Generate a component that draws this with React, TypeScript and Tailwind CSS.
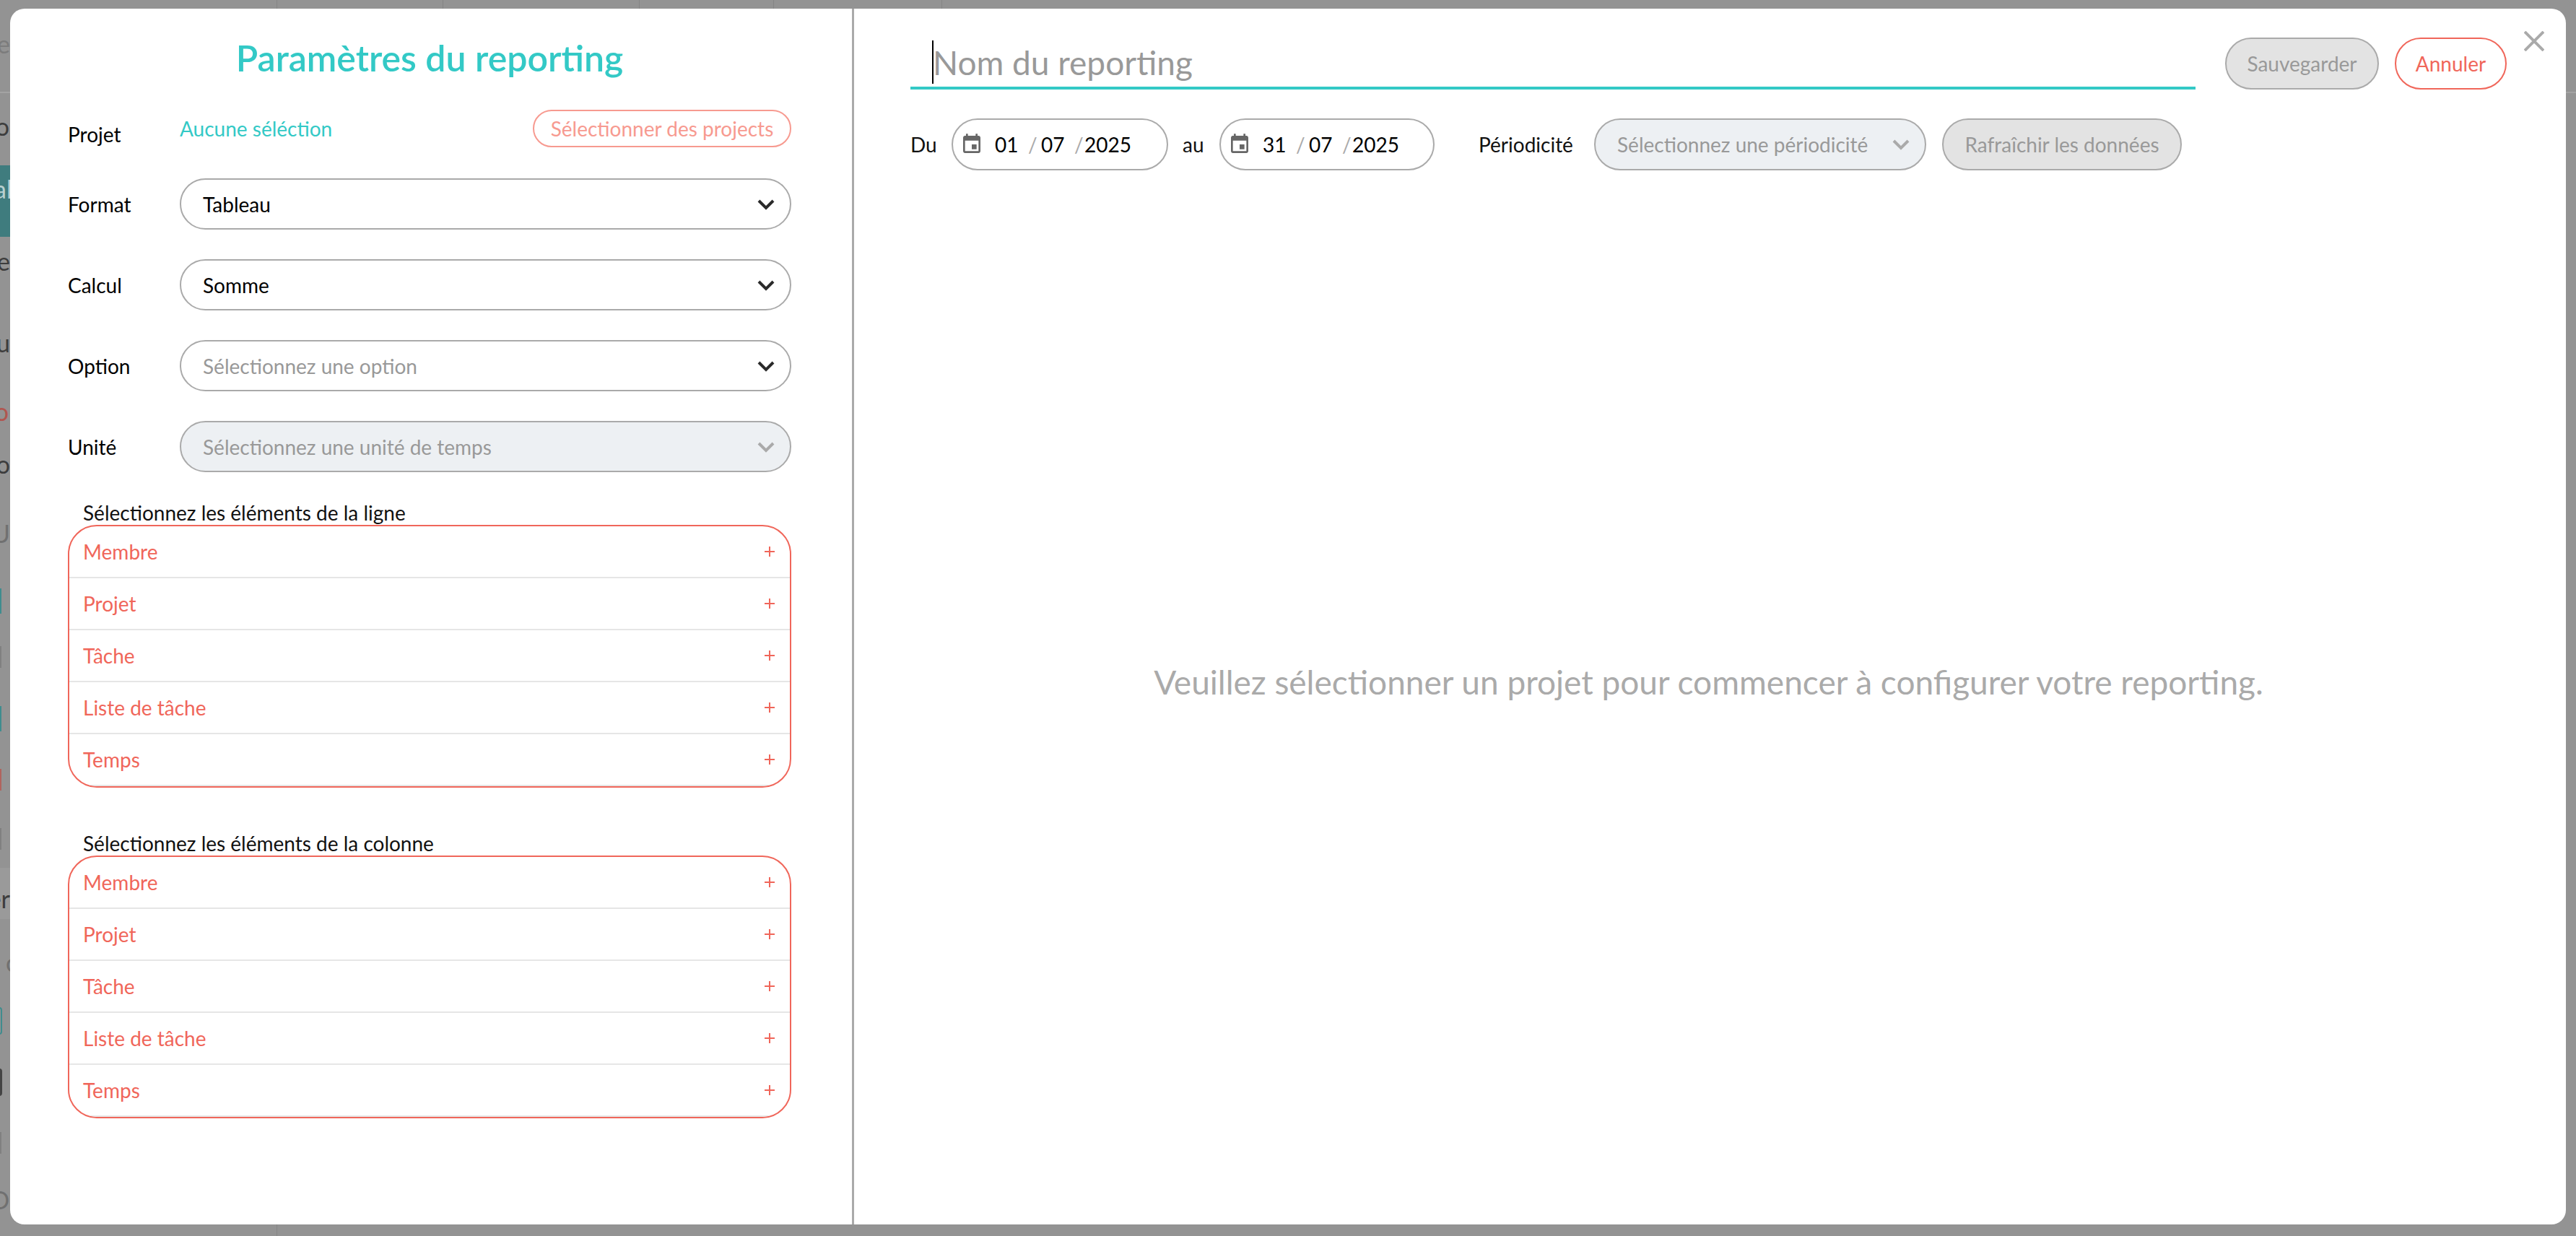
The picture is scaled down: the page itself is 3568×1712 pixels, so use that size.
import React from "react";

const ROW_ITEMS = ["Membre", "Projet", "Tâche", "Liste de tâche", "Temps"];

const Chevron = ({ muted = false }: { muted?: boolean }) => (
  <svg viewBox="0 0 26 16" className={`h-[16px] w-[26px] shrink-0 ${muted ? "text-[#aaaaaa]" : "text-[#2a2a2a]"}`}>
    <polyline points="3,3 13,13 23,3" fill="none" stroke="currentColor" strokeWidth="4" />
  </svg>
);

const CalendarIcon = () => (
  <svg viewBox="0 0 24 24" className="h-[32px] w-[32px] shrink-0 fill-[#666666]">
    <path d="M17 12h-5v5h5v-5zM16 1v2H8V1H6v2H5c-1.11 0-1.99.9-1.99 2L3 19c0 1.1.89 2 2 2h14c1.1 0 2-.9 2-2V5c0-1.1-.9-2-2-2h-1V1h-2zm3 18H5V8h14v11z" />
  </svg>
);

const SelectField = ({ label, value, placeholder, disabled }: { label: string; value?: string; placeholder?: string; disabled?: boolean }) => (
  <div className="mt-[41px] flex items-center first-of-type:mt-[40px]">
    <span className="w-[155px] text-[28px] text-black">{label}</span>
    <div
      className={`flex h-[71px] flex-1 items-center justify-between rounded-[36px] border-2 border-[#aaaaaa] pl-[30px] pr-[20px] text-[28px] ${
        disabled ? "bg-[#edf0f3]" : "bg-white"
      } ${value ? "text-black" : "text-[#999999]"}`}
    >
      <span>{value ?? placeholder}</span>
      <Chevron muted={disabled} />
    </div>
  </div>
);

const ElementList = ({ title, className }: { title: string; className: string }) => (
  <div className={className}>
    <p className="ml-[21px] h-[34px] text-[28px] leading-[34px] text-[#111111]">{title}</p>
    <div className="overflow-hidden rounded-[40px] border-2 border-[#f0665a]">
      {ROW_ITEMS.map((item) => (
        <div key={item} className="flex h-[72px] items-center justify-between border-b-2 border-[#e6e6e6] pl-[19px] pr-[20px] text-[28px] text-[#f0665a]">
          <span>{item}</span>
          <svg viewBox="0 0 16 16" className="h-[16px] w-[16px]">
            <path d="M8 1v14M1 8h14" stroke="currentColor" strokeWidth="2" />
          </svg>
        </div>
      ))}
    </div>
  </div>
);

const DateField = ({ day, className }: { day: string; className: string }) => (
  <div className={`flex h-[72px] items-center rounded-[36px] border-2 border-[#aaaaaa] pl-[10px] text-[28px] text-black ${className}`}>
    <CalendarIcon />
    <span className="ml-[16px] w-[46px]">{day}</span>
    <span className="w-[18px] text-[#aaaaaa]">/</span>
    <span className="w-[46px]">07</span>
    <span className="w-[14px] text-[#aaaaaa]">/</span>
    <span>2025</span>
  </div>
);

// bouts de la page derrière le modal, visibles sur le bord gauche
const BackdropStrip = () => (
  <div className="absolute left-0 top-0 h-full w-[14px] overflow-hidden text-[34px] leading-none">
    <div className="absolute left-0 top-[127px] h-[2px] w-full bg-[#a3a3a3]" />
    <div className="absolute left-0 top-[229px] h-[99px] w-full bg-[#3f7c7e]" />
    <div className="absolute left-0 top-[1202px] h-[71px] w-full bg-[#9a9a9a]" />
    <span className="absolute right-[0px] top-[44px] text-[#7c7c7c]">e</span>
    <span className="absolute right-[1px] top-[158px] text-[#3d3d3d]">o</span>
    <span className="absolute left-[-8px] top-[245px] whitespace-nowrap text-[#b8d0d0]">al</span>
    <span className="absolute right-[0px] top-[345px] text-[#3d3d3d]">le</span>
    <span className="absolute right-[0px] top-[458px] text-[#3d3d3d]">lu</span>
    <span className="absolute right-[2px] top-[553px] text-[#b0564f]">o</span>
    <span className="absolute right-[0px] top-[626px] text-[#3d3d3d]">o</span>
    <span className="absolute right-[0px] top-[722px] text-[#707070]">U</span>
    <div className="absolute left-0 top-[815px] h-[35px] w-[2px] bg-[#3f8c8e]" />
    <div className="absolute left-0 top-[895px] h-[30px] w-[2px] bg-[#808080]" />
    <div className="absolute left-0 top-[978px] h-[35px] w-[2px] bg-[#3f8c8e]" />
    <div className="absolute left-0 top-[1065px] h-[30px] w-[2px] bg-[#b0645e]" />
    <div className="absolute left-0 top-[1147px] h-[30px] w-[2px] bg-[#808080]" />
    <span className="absolute right-[0px] top-[1228px] text-[#3d3d3d]">er</span>
    <span className="absolute left-[8px] top-[1316px] text-[#707070]">c</span>
    <div className="absolute left-[-6px] top-[1395px] h-[38px] w-[9px] rounded-[4px] border-2 border-[#3f8c8e]" />
    <div className="absolute left-[-6px] top-[1480px] h-[38px] w-[9px] rounded-[4px] bg-[#444444]" />
    <div className="absolute left-0 top-[1568px] h-[30px] w-[2px] bg-[#808080]" />
    <span className="absolute left-[-14px] top-[1645px] text-[#707070]">O</span>
  </div>
);

const BackdropLines = () => (
  <>
    <div className="absolute left-[383px] top-0 h-full w-[1px] bg-[#858585]" />
    <div className="absolute left-[613px] top-0 h-[12px] w-[1px] bg-[#858585]" />
    <div className="absolute left-[885px] top-0 h-[12px] w-[1px] bg-[#858585]" />
    <div className="absolute left-[1071px] top-0 h-[12px] w-[1px] bg-[#858585]" />
    <div className="absolute left-[1304px] top-0 h-[12px] w-[1px] bg-[#858585]" />
    <div className="absolute right-0 top-[127px] h-[2px] w-[14px] bg-[#a3a3a3]" />
  </>
);

export default function App() {
  return (
    <div className="relative h-[1712px] w-[3568px] overflow-hidden bg-[#939393] pb-[16px] pl-[14px] pr-[14px] pt-[12px] font-[Lato,sans-serif]">
      <BackdropLines />
      <BackdropStrip />

      <div className="relative flex h-full w-full rounded-[20px] bg-white">
        {/* Colonne des paramètres */}
        <div className="w-[1169px] shrink-0 border-r-[3px] border-[#aaaaaa] pl-[80px] pr-[84px] pt-[34px]">
          <h1 className="h-[68px] text-center text-[50px] font-semibold leading-[68px] text-[#33c9c6]">Paramètres du reporting</h1>

          <div className="mt-[35px] flex items-center">
            <span className="mt-[16px] w-[155px] text-[28px] text-black">Projet</span>
            <span className="flex-1 text-[28px] text-[#33c9c6]">Aucune séléction</span>
            <button className="h-[52px] w-[358px] rounded-[26px] border-2 border-[#f79a90] text-[28px] text-[#f79a90]">Sélectionner des projects</button>
          </div>

          <div>
            <SelectField label="Format" value="Tableau" />
            <SelectField label="Calcul" value="Somme" />
            <SelectField label="Option" placeholder="Sélectionnez une option" />
            <SelectField label="Unité" placeholder="Sélectionnez une unité de temps" disabled />
          </div>

          <ElementList title="Sélectionnez les éléments de la ligne" className="mt-[39px]" />
          <ElementList title="Sélectionnez les éléments de la colonne" className="mt-[60px]" />
        </div>

        {/* Colonne du reporting */}
        <div className="flex min-w-0 flex-1 flex-col">
          <div className="pl-[78px] pt-[40px]">
            <div className="flex items-stretch">
              <div className="relative flex h-[72px] w-[1780px] items-center border-b-4 border-[#33c9c6] pl-[31px] text-[46px] text-[#999999]">
                <div className="absolute left-[30px] top-[4px] h-[60px] w-[2px] bg-black" />
                Nom du reporting
              </div>
              <button className="ml-[41px] h-[72px] w-[213px] rounded-[36px] border-2 border-[#aaaaaa] bg-[#e3e3e3] text-[28px] text-[#999999]">Sauvegarder</button>
              <button className="ml-[22px] h-[72px] w-[155px] rounded-[36px] border-2 border-[#f0665a] text-[28px] text-[#f0665a]">Annuler</button>
            </div>

            <div className="mt-[40px] flex items-center text-[28px] text-[#111111]">
              <span className="w-[57px]">Du</span>
              <DateField day="01" className="w-[300px]" />
              <span className="w-[71px] pl-[20px]">au</span>
              <DateField day="31" className="w-[298px]" />
              <span className="ml-[61px] w-[160px]">Périodicité</span>
              <div className="flex h-[72px] w-[460px] items-center justify-between rounded-[36px] border-2 border-[#aaaaaa] bg-[#edf0f3] pl-[30px] pr-[20px] text-[#999999]">
                <span>Sélectionnez une périodicité</span>
                <Chevron muted />
              </div>
              <button className="ml-[22px] h-[72px] w-[332px] rounded-[36px] border-2 border-[#aaaaaa] bg-[#e3e3e3] text-[#999999]">Rafraîchir les données</button>
            </div>
          </div>

          <div className="flex flex-1 items-center justify-center pb-[44px] pr-[4px] text-[46px] text-[#aaaaaa]">
            Veuillez sélectionner un projet pour commencer à configurer votre reporting.
          </div>
        </div>

        <svg viewBox="0 0 28 28" className="absolute right-[30px] top-[31px] h-[28px] w-[28px] text-[#aaaaaa]">
          <path d="M1 1l26 26M27 1L1 27" stroke="currentColor" strokeWidth="4" fill="none" />
        </svg>
      </div>
    </div>
  );
}
